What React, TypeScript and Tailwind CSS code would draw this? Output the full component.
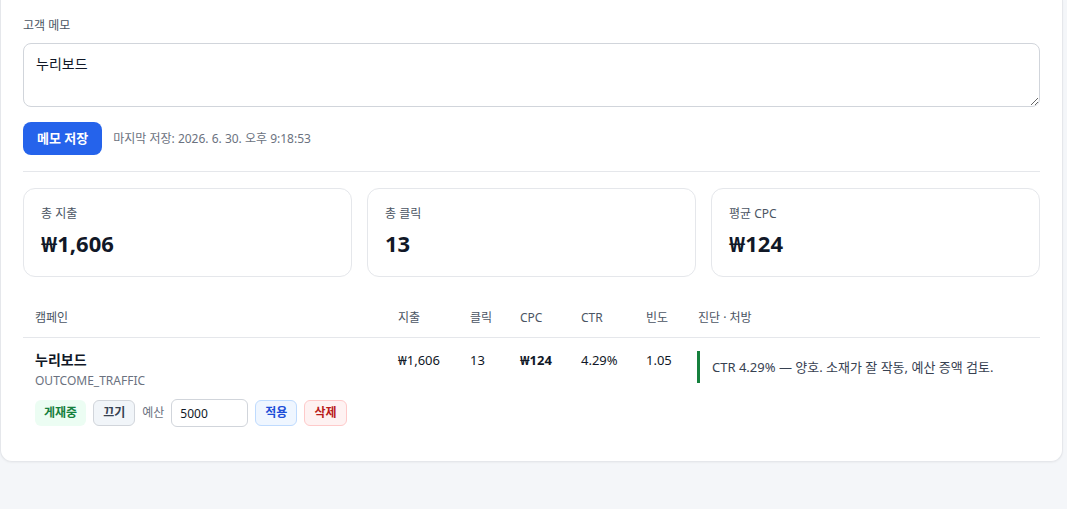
import React from 'react'

const FONT = { fontFamily: '"Noto Sans", "Noto Sans CJK KR", sans-serif' }

const stats = [
  { label: '총 지출', value: '₩1,606' },
  { label: '총 클릭', value: '13' },
  { label: '평균 CPC', value: '₩124' },
]

export default function App() {
  return (
    <div className="min-h-[509px] w-[1067px] bg-[#f4f6f9]" style={FONT}>
      <div className="w-[1063px] rounded-b-xl border-x border-b border-[#e5e7eb] bg-white px-[22px] pt-[17px] pb-[22px] shadow-[0_1px_2px_rgba(0,0,0,0.04)]">
        {/* Memo */}
        <div className="mb-[8px] text-[12px] leading-[18px] text-[#4b5563]">고객 메모</div>
        <textarea
          defaultValue="누리보드"
          className="block h-[64px] w-full resize-y rounded-lg border border-[#d1d5db] px-[12px] py-[10px] text-[14px] leading-[20px] text-[#111827] outline-none"
        />
        <div className="mt-[15px] flex items-center gap-[11px]">
          <button className="h-[33px] rounded-lg bg-[#2563eb] px-[14px] text-[13px] font-bold text-white">
            메모 저장
          </button>
          <span className="text-[12px] text-[#6b7280]">마지막 저장: 2026. 6. 30. 오후 9:18:53</span>
        </div>
        <div className="mt-[16px] h-px bg-[#e5e7eb]" />

        {/* Stats */}
        <div className="mt-[16px] grid grid-cols-3 gap-[15px]">
          {stats.map((s) => (
            <div key={s.label} className="rounded-xl border border-[#e5e7eb] px-[17px] pt-[17px] pb-[18px]">
              <div className="text-[12px] leading-[16px] text-[#4b5563]">{s.label}</div>
              <div className="mt-[6px] text-[22px] font-bold leading-[30px] text-[#111827]">{s.value}</div>
            </div>
          ))}
        </div>

        {/* Campaign table */}
        <table className="mt-[22px] w-full border-collapse text-left">
          <thead>
            <tr className="border-b border-[#e5e7eb] text-[12px] leading-[16px] text-[#4b5563]">
              <th className="w-[363px] px-[12px] py-[11px] font-normal">캠페인</th>
              <th className="w-[72px] px-[12px] py-[11px] font-normal">지출</th>
              <th className="w-[50px] px-[12px] py-[11px] font-normal">클릭</th>
              <th className="w-[61px] px-[12px] py-[11px] font-normal">CPC</th>
              <th className="w-[65px] px-[12px] py-[11px] font-normal">CTR</th>
              <th className="w-[52px] px-[12px] py-[11px] font-normal">빈도</th>
              <th className="px-[12px] py-[11px] font-normal">진단 · 처방</th>
            </tr>
          </thead>
          <tbody>
            <tr className="align-top text-[13px] leading-[20px] text-[#111827]">
              <td className="px-[12px] pt-[12px] pb-[12px]">
                <div className="text-[14px] font-semibold leading-[20px]">누리보드</div>
                <div className="mt-[2px] text-[12px] leading-[18px] text-[#6b7280]">OUTCOME_TRAFFIC</div>
                <div className="mt-[9px] flex items-center gap-[7px] text-[12px]">
                  <span className="rounded-md bg-[#ecfdf3] px-[9px] py-[3px] font-semibold text-[#15803d]">게재중</span>
                  <button className="h-[26px] rounded-md border border-[#d1d5db] bg-[#f1f5f9] px-[9px] font-bold text-[#374151]">끄기</button>
                  <span className="text-[#6b7280]">예산</span>
                  <input
                    defaultValue="5000"
                    className="h-[28px] w-[77px] rounded-md border border-[#d1d5db] px-[8px] text-[12px] text-[#111827] outline-none"
                  />
                  <button className="h-[26px] rounded-md border border-[#bfdbfe] bg-[#eff6ff] px-[9px] font-semibold text-[#1d4ed8]">적용</button>
                  <button className="h-[26px] rounded-md border border-[#fecaca] bg-[#fef2f2] px-[9px] font-semibold text-[#b91c1c]">삭제</button>
                </div>
              </td>
              <td className="px-[12px] pt-[12px]">₩1,606</td>
              <td className="px-[12px] pt-[12px]">13</td>
              <td className="px-[12px] pt-[12px] font-bold">₩124</td>
              <td className="px-[12px] pt-[12px]">4.29%</td>
              <td className="px-[12px] pt-[12px]">1.05</td>
              <td className="px-[11px] pt-[13px]">
                <div className="border-l-[3px] border-[#15803d] py-[7px] pl-[12px] text-[13px] leading-[18px] text-[#374151]">
                  CTR 4.29% — 양호. 소재가 잘 작동, 예산 증액 검토.
                </div>
              </td>
            </tr>
          </tbody>
        </table>
      </div>
    </div>
  )
}
